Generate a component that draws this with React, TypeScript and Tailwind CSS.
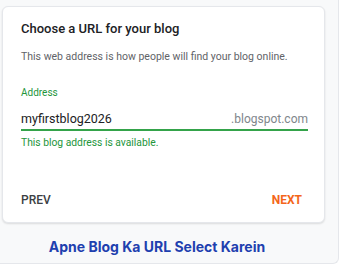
export default function App() {
  return (
    <div className="h-[266px] w-[342px] bg-white font-[Roboto,'Liberation_Sans',sans-serif]">
      <div className="h-[264px] w-[339px] rounded-br-md border-r border-b border-gray-200 bg-[#f8f9fa] pt-[6px] pl-[2px]">
        <div className="flex h-[217px] w-[323px] flex-col rounded-md border border-gray-200 bg-white pt-[13px] pr-[16px] pb-[14px] pl-[18px] shadow-[0_1px_2px_rgba(0,0,0,0.12)]">
          <h2 className="text-[13px] font-medium leading-[18px] text-[#202124]">Choose a URL for your blog</h2>
          <p className="mt-[12px] text-[10.5px] leading-[14px] text-[#5f6368]">
            This web address is how people will find your blog online.
          </p>
          <label className="mt-[22px] text-[10px] leading-[14px] text-[#23953b]">Address</label>
          <div className="mt-[11px] flex items-baseline justify-between border-b-2 border-[#34a34a] pb-[2px]">
            <span className="text-[12.5px] leading-[16px] text-[#202124]">myfirstblog2026</span>
            <span className="text-[12px] leading-[16px] text-[#80868b]">.blogspot.com</span>
          </div>
          <p className="mt-[5px] text-[10.3px] leading-[14px] text-[#23953b]">This blog address is available.</p>
          <div className="mt-auto flex items-center justify-between">
            <button className="text-[12px] font-medium leading-[16px] text-[#3c4043]">PREV</button>
            <button className="mr-[6px] text-[12px] font-bold leading-[16px] text-[#f4661b]">NEXT</button>
          </div>
        </div>
        <p className="mt-[14px] w-[310px] text-center font-[Inter,Roboto,sans-serif] text-[14px] leading-[20px] font-bold text-[#1e40af]">
          Apne Blog Ka URL Select Karein
        </p>
      </div>
    </div>
  )
}
